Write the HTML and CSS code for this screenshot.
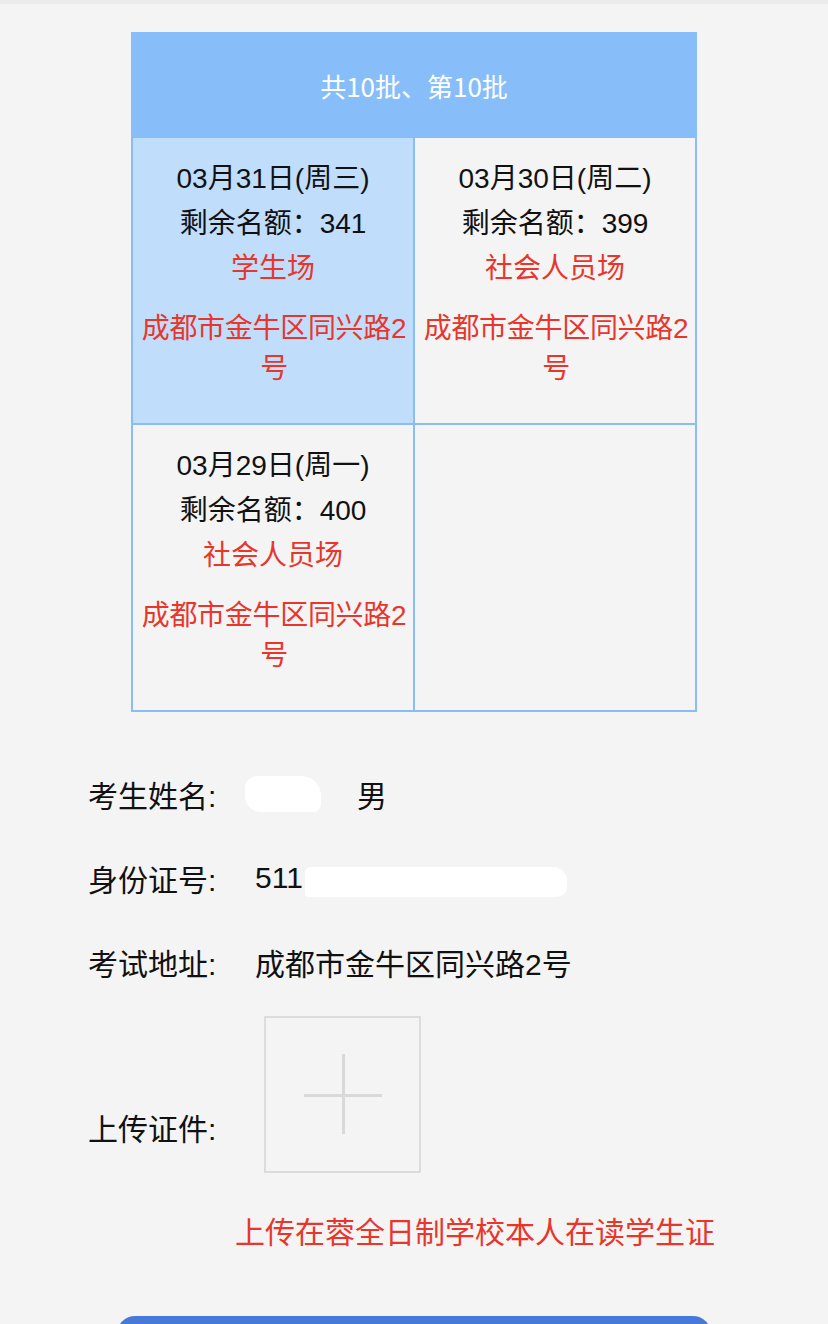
FILE: index.html
```html
<!DOCTYPE html>
<html lang="zh-CN">
<head>
<meta charset="utf-8">
<title>选择批次</title>
<link rel="stylesheet" href="styles.css">
</head>
<body>
<div class="topbar"></div>
<main class="page">
  <section class="batch">
    <div class="batch-head">共10批、第10批</div>
    <div class="batch-grid">
      <div class="cell selected">
        <div class="line">03月31日(周三)</div>
        <div class="line">剩余名额：341</div>
        <div class="line red">学生场</div>
        <div class="addr red">成都市金牛区同兴路2号</div>
      </div>
      <div class="cell">
        <div class="line">03月30日(周二)</div>
        <div class="line">剩余名额：399</div>
        <div class="line red">社会人员场</div>
        <div class="addr red">成都市金牛区同兴路2号</div>
      </div>
      <div class="cell">
        <div class="line">03月29日(周一)</div>
        <div class="line">剩余名额：400</div>
        <div class="line red">社会人员场</div>
        <div class="addr red">成都市金牛区同兴路2号</div>
      </div>
      <div class="cell"></div>
    </div>
  </section>

  <section class="form">
    <div class="row">
      <div class="label">考生姓名:</div>
      <div class="value">
        <span class="blot blot-name"></span>
        <span class="gender">男</span>
      </div>
    </div>
    <div class="row">
      <div class="label">身份证号:</div>
      <div class="value value-id">
        <span class="id">511</span>
        <span class="blot blot-id"></span>
      </div>
    </div>
    <div class="row">
      <div class="label">考试地址:</div>
      <div class="value">成都市金牛区同兴路2号</div>
    </div>
    <div class="upload-row">
      <div class="label upload-label">上传证件:</div>
      <div class="upload-box"><span class="plus-h"></span><span class="plus-v"></span></div>
    </div>
    <div class="hint">上传在蓉全日制学校本人在读学生证</div>
  </section>

  <div class="submit"></div>
</main>
</body>
</html>
```
FILE: styles.css
```css
* { box-sizing: border-box; }
html, body { margin: 0; padding: 0; }
body {
  background: #f4f4f4;
  font-family: "Liberation Sans", "Noto Sans CJK SC", sans-serif;
  color: #111;
  height: 1324px;
  overflow: hidden;
}
.topbar { height: 4px; background: #ebebeb; }
.page { padding-top: 28px; height: 1320px; overflow: hidden; }

.batch { width: 566px; margin-left: 131px; }
.batch-head {
  height: 106px;
  background: #87bef9;
  color: #fff;
  font-family: "Noto Sans CJK SC", sans-serif;
  font-size: 26px;
  font-weight: 400;
  display: flex;
  align-items: center;
  justify-content: center;
}
.batch-grid {
  display: grid;
  grid-template-columns: 1fr 1fr;
  border-left: 2px solid #88bdf6;
}
.cell {
  height: 287px;
  border-right: 2px solid #88bdf6;
  border-bottom: 2px solid #88bdf6;
  text-align: center;
  font-size: 28px;
  padding-top: 18px;
}
.cell.selected { background: #c0ddfb; }
.line { line-height: 45px; }
.addr { line-height: 40px; margin-top: 18px; padding: 0 4px 0 6px; letter-spacing: -0.3px; }
.red { color: #e8362c; }

.form { padding-left: 88px; margin-top: 40px; font-size: 30px; }
.row { display: flex; align-items: center; height: 84px; }
.label { width: 167px; flex: none; }
.value { display: flex; align-items: center; position: relative; }
.blot {
  display: inline-block;
  background: #fff;
}
.blot-name {
  width: 76px; height: 36px;
  margin-left: -10px;
  margin-right: 36px;
  border-radius: 12px 20px 8px 16px;
}
.gender { display: inline-block; }
.value-id .id { display: inline-block; }
.blot-id {
  position: absolute;
  left: 50px; top: 6px;
  width: 262px; height: 30px;
  border-radius: 6px 14px 10px 4px;
}

.upload-row { display: flex; align-items: flex-end; margin-top: 12px; }
.upload-label { line-height: 44px; margin-bottom: 21px; width: 176px; }
.upload-box {
  width: 157px; height: 157px;
  border: 2px solid #dcdcdc;
  position: relative;
}
.plus-h {
  position: absolute; left: 38px; top: 76px;
  width: 78px; height: 3px; background: #d9d9d9;
}
.plus-v {
  position: absolute; left: 76px; top: 36px;
  width: 3px; height: 80px; background: #d9d9d9;
}
.hint {
  color: #e8362c;
  line-height: 44px;
  margin-top: 38px;
  padding-left: 147px;
}
.submit {
  margin: 61px 0 0 117px;
  width: 594px; height: 90px;
  background: #4779d8;
  border-radius: 18px;
}
```
